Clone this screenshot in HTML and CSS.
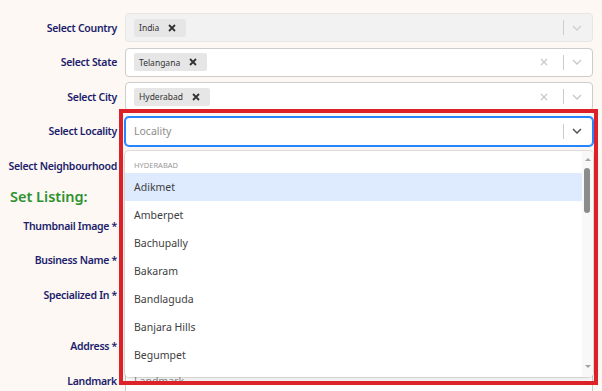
FILE: index.html
```html
<!DOCTYPE html>
<html lang="en">
<head>
    <meta charset="UTF-8">
    <meta name="viewport" content="width=device-width, initial-scale=1.0">
    <title>Add Listing</title>
    <link rel="stylesheet" href="styles.css">
</head>
<body>
    <div class="form">
        <div class="row">
            <label class="field-label">Select Country</label>
            <div class="select is-disabled">
                <div class="select-value">
                    <span class="tag"><span class="tag-text">India</span><span class="tag-remove"><svg width="8" height="8" viewBox="0 0 8 8"><path d="M1 1L7 7M7 1L1 7" stroke="#333" stroke-width="1.8"/></svg></span></span>
                </div>
                <div class="indicators">
                    <span class="separator"></span>
                    <span class="chevron"><svg width="10" height="6" viewBox="0 0 10 6"><path d="M1 1l4 4 4-4" fill="none" stroke="#d0d0d0" stroke-width="1.4"/></svg></span>
                </div>
            </div>
        </div>

        <div class="row">
            <label class="field-label">Select State</label>
            <div class="select">
                <div class="select-value">
                    <span class="tag"><span class="tag-text">Telangana</span><span class="tag-remove"><svg width="8" height="8" viewBox="0 0 8 8"><path d="M1 1L7 7M7 1L1 7" stroke="#333" stroke-width="1.8"/></svg></span></span>
                </div>
                <div class="indicators">
                    <span class="clear"><svg width="8" height="8" viewBox="0 0 8 8"><path d="M1 1L7 7M7 1L1 7" stroke="#c8c8c8" stroke-width="1.3"/></svg></span>
                    <span class="separator"></span>
                    <span class="chevron"><svg width="10" height="6" viewBox="0 0 10 6"><path d="M1 1l4 4 4-4" fill="none" stroke="#c8c8c8" stroke-width="1.4"/></svg></span>
                </div>
            </div>
        </div>

        <div class="row">
            <label class="field-label">Select City</label>
            <div class="select">
                <div class="select-value">
                    <span class="tag"><span class="tag-text">Hyderabad</span><span class="tag-remove"><svg width="8" height="8" viewBox="0 0 8 8"><path d="M1 1L7 7M7 1L1 7" stroke="#333" stroke-width="1.8"/></svg></span></span>
                </div>
                <div class="indicators">
                    <span class="clear"><svg width="8" height="8" viewBox="0 0 8 8"><path d="M1 1L7 7M7 1L1 7" stroke="#c8c8c8" stroke-width="1.3"/></svg></span>
                    <span class="separator"></span>
                    <span class="chevron"><svg width="10" height="6" viewBox="0 0 10 6"><path d="M1 1l4 4 4-4" fill="none" stroke="#c8c8c8" stroke-width="1.4"/></svg></span>
                </div>
            </div>
        </div>

        <div class="row">
            <label class="field-label">Select Locality</label>
            <div class="select is-focused">
                <div class="select-value">
                    <span class="placeholder">Locality</span>
                </div>
                <div class="indicators">
                    <span class="separator"></span>
                    <span class="chevron"><svg width="10" height="6" viewBox="0 0 10 6"><path d="M1 1l4 4 4-4" fill="none" stroke="#555" stroke-width="1.5"/></svg></span>
                </div>

                <!-- open dropdown menu -->
                <div class="menu">
                    <div class="menu-list">
                        <div class="group-heading">HYDERABAD</div>
                        <div class="option is-active">Adikmet</div>
                        <div class="option">Amberpet</div>
                        <div class="option">Bachupally</div>
                        <div class="option">Bakaram</div>
                        <div class="option">Bandlaguda</div>
                        <div class="option">Banjara Hills</div>
                        <div class="option">Begumpet</div>
                    </div>
                    <div class="scrollbar">
                        <span class="scroll-up"></span>
                        <span class="scroll-thumb"></span>
                        <span class="scroll-down"></span>
                    </div>
                </div>

                <div class="highlight-box"></div>
            </div>
        </div>

        <div class="row">
            <label class="field-label">Select Neighbourhood</label>
            <div class="select"></div>
        </div>

        <h3 class="section-title">Set Listing:</h3>

        <div class="row">
            <label class="field-label">Thumbnail Image *</label>
            <div class="input"></div>
        </div>
        <div class="row">
            <label class="field-label">Business Name *</label>
            <div class="input"></div>
        </div>
        <div class="row">
            <label class="field-label">Specialized In *</label>
            <div class="input"></div>
        </div>
        <div class="row row-spaced">
            <label class="field-label">Address *</label>
            <div class="input"></div>
        </div>
        <div class="row">
            <label class="field-label">Landmark</label>
            <div class="input"><span class="placeholder">Landmark</span></div>
        </div>
    </div>
</body>
</html>
```

FILE: styles.css
```css
body {
    margin: 0;
    background-color: #fdf8f4;
    font-family: 'Noto Sans', 'Open Sans', sans-serif;
    overflow: hidden;
}

.form {
    display: flex;
    flex-direction: column;
    gap: 5.5px;
    padding: 13px 9px 0 8px;
}

.row {
    display: flex;
    align-items: center;
    gap: 8px;
    height: 29px;
}

.row-spaced {
    margin-top: 17px;
}

.field-label {
    width: 109px;
    flex-shrink: 0;
    text-align: right;
    font-size: 10.5px;
    font-weight: 600;
    color: #211d6c;
    white-space: nowrap;
    letter-spacing: -0.3px;
}

.section-title {
    margin: 0;
    height: 20px;
    line-height: 20px;
    padding-left: 2px;
    font-size: 14.5px;
    font-weight: 600;
    color: #2e9130;
}

.select,
.input {
    position: relative;
    box-sizing: border-box;
    width: 468px;
    height: 29px;
    display: flex;
    align-items: center;
    background-color: #ffffff;
    border: 1px solid #cccccc;
    border-radius: 4px;
}

.select.is-disabled {
    background-color: #f2f2f2;
    border-color: #e6e6e6;
}

.select.is-focused {
    border-color: #2684ff;
    box-shadow: 0 0 0 1px #2684ff;
}

.select-value,
.input {
    padding-left: 8px;
}

.select-value {
    flex: 1;
    display: flex;
    align-items: center;
}

.tag {
    display: flex;
    align-items: center;
    height: 18px;
    background-color: #e6e6e6;
    border-radius: 2px;
}

.tag-text {
    padding-left: 5px;
    font-size: 8.5px;
    color: #333333;
}

.tag-remove {
    display: flex;
    padding: 0 10px 0 9px;
}

.placeholder {
    font-size: 10.5px;
    color: #8c8c8c;
}

.indicators {
    display: flex;
    align-items: center;
    height: 100%;
    padding-right: 10px;
}

.clear {
    display: flex;
    margin-right: 15px;
}

.separator {
    width: 1px;
    height: 15px;
    background-color: #cccccc;
}

.chevron {
    display: flex;
    margin-left: 8px;
}

.menu {
    position: absolute;
    top: 33px;
    left: -1px;
    width: 468px;
    height: 226px;
    display: flex;
    background-color: #ffffff;
    border-radius: 4px;
    box-shadow: 0 0 0 1px rgba(0, 0, 0, 0.1), 0 4px 11px rgba(0, 0, 0, 0.1);
    overflow: hidden;
    z-index: 5;
}

.menu-list {
    flex: 1;
    padding-top: 8px;
}

.group-heading {
    height: 12px;
    line-height: 12px;
    margin-bottom: 2px;
    padding-left: 9px;
    font-size: 7.5px;
    color: #999999;
}

.option {
    height: 28px;
    line-height: 28px;
    padding-left: 9px;
    font-size: 10.5px;
    color: #404040;
}

.option.is-active {
    background-color: #deebff;
}

.scrollbar {
    position: relative;
    width: 11px;
    background-color: #f8f8f8;
}

.scroll-up,
.scroll-down {
    position: absolute;
    left: 3px;
    width: 0;
    height: 0;
    border-left: 3px solid transparent;
    border-right: 3px solid transparent;
}

.scroll-up {
    top: 7px;
    border-bottom: 3px solid #a3a3a3;
}

.scroll-down {
    bottom: 9px;
    border-top: 3px solid #a3a3a3;
}

.scroll-thumb {
    position: absolute;
    top: 17px;
    left: 2px;
    width: 6px;
    height: 45px;
    border-radius: 3px;
    background-color: #8c8c8c;
}

.highlight-box {
    position: absolute;
    top: -9px;
    left: -7px;
    box-sizing: border-box;
    width: 479px;
    height: 276px;
    border: 4px solid #dc2128;
    z-index: 6;
    pointer-events: none;
}
```
